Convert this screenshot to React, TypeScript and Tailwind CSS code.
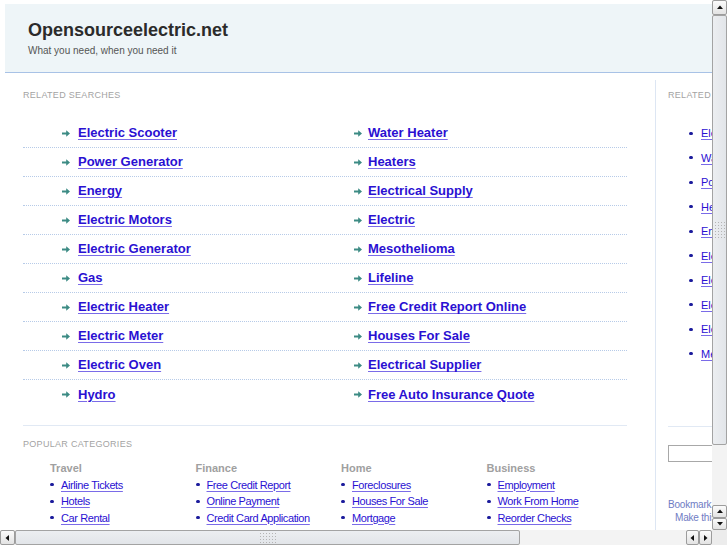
import React from 'react';

const leftLinks = [
  'Electric Scooter',
  'Power Generator',
  'Energy',
  'Electric Motors',
  'Electric Generator',
  'Gas',
  'Electric Heater',
  'Electric Meter',
  'Electric Oven',
  'Hydro',
];

const rightLinks = [
  'Water Heater',
  'Heaters',
  'Electrical Supply',
  'Electric',
  'Mesothelioma',
  'Lifeline',
  'Free Credit Report Online',
  'Houses For Sale',
  'Electrical Supplier',
  'Free Auto Insurance Quote',
];

const sideLinks = [
  'Electric Scooter',
  'Water Heater',
  'Power Generator',
  'Heaters',
  'Energy',
  'Electrical Supply',
  'Electric Motors',
  'Electric',
  'Electric Generator',
  'Mesothelioma',
];

const categories = [
  { title: 'Travel', links: ['Airline Tickets', 'Hotels', 'Car Rental'] },
  { title: 'Finance', links: ['Free Credit Report', 'Online Payment', 'Credit Card Application'] },
  { title: 'Home', links: ['Foreclosures', 'Houses For Sale', 'Mortgage'] },
  { title: 'Business', links: ['Employment', 'Work From Home', 'Reorder Checks'] },
];

const Arrow = () => (
  <svg width="8" height="7" viewBox="0 0 8 7" className="shrink-0">
    <path d="M0 2.4h4.2V0.2L8 3.5 4.2 6.8V4.6H0z" fill="#3c8b84" />
  </svg>
);

const Dot = () => <span className="inline-block w-[4px] h-[3px] rounded-full bg-[#1b1b9c] shrink-0" />;

const Grip = ({ cols }: { cols: 4 | 6 }) => (
  <div className={cols === 4 ? 'grid grid-cols-4 gap-[2px]' : 'grid grid-cols-6 gap-[2px]'}>
    {Array.from({ length: 24 }).map((_, i) => (
      <span key={i} className="w-[1px] h-[1px] bg-[#b4b4b4]" />
    ))}
  </div>
);

const ArrowBtn = ({ dir, className = '' }: { dir: 'up' | 'down' | 'left' | 'right'; className?: string }) => {
  const paths: Record<string, string> = {
    up: 'M1 5L4 1.5 7 5z',
    down: 'M1 2L4 5.5 7 2z',
    left: 'M5 1L1.5 4 5 7z',
    right: 'M2 1L5.5 4 2 7z',
  };
  return (
    <div
      className={`flex items-center justify-center border border-[#9c9c9c] rounded-[2px] bg-gradient-to-b from-[#fbfbfb] to-[#e3e3e3] ${className}`}
    >
      <svg width="8" height="8" viewBox="0 0 8 8">
        <path d={paths[dir]} fill="#111" />
      </svg>
    </div>
  );
};

export default function App() {
  const link = 'text-[#2a10d2] underline decoration-[#7a6be8] underline-offset-[2px]';
  return (
    <div
      className="w-[727px] h-[545px] overflow-hidden flex flex-col bg-white"
      style={{ fontFamily: '"Liberation Sans", Arial, sans-serif' }}
    >
      <div className="flex flex-1 min-h-0">
        {/* page */}
        <div className="w-[712px] overflow-hidden">
          <div className="w-[900px] pt-[4px]">
            {/* header */}
            <div className="ml-[5px] h-[69px] bg-[#eef5f8] border-b border-[#a8c2e6] pl-[23px] pt-[15px]">
              <div className="text-[18px] leading-[22px] font-bold text-[#2b2b2b]">Opensourceelectric.net</div>
              <div className="mt-[4px] text-[10px] leading-[12px] text-[#555]">What you need, when you need it</div>
            </div>

            <div className="flex mt-[7px]">
              {/* main column */}
              <div className="w-[656px] shrink-0 pl-[23px] pt-[10px] border-r border-[#dde6f3] pb-[40px]">
                <div className="text-[9px] leading-[10px] tracking-[0.3px] text-[#a3a3a3]">RELATED SEARCHES</div>
                <div className="mt-[19px] w-[604px]">
                  {leftLinks.map((l, i) => (
                    <div
                      key={l}
                      className={`flex h-[29px] items-center ${i < leftLinks.length - 1 ? 'border-b border-dotted border-[#b7cbe8]' : ''}`}
                    >
                      <div className="w-[331px] pl-[39px] flex items-center gap-[8px]">
                        <Arrow />
                        <a className={`${link} text-[13px] font-bold`}>{l}</a>
                      </div>
                      <div className="flex items-center gap-[6px]">
                        <Arrow />
                        <a className={`${link} text-[13px] font-bold`}>{rightLinks[i]}</a>
                      </div>
                    </div>
                  ))}
                </div>
                <div className="mt-[16px] w-[604px] border-t border-[#e1e9f4] pt-[13px]">
                  <div className="text-[9px] leading-[10px] tracking-[0.3px] text-[#a3a3a3]">POPULAR CATEGORIES</div>
                  <div className="flex pl-[27px] mt-[12px]">
                    {categories.map((c) => (
                      <div key={c.title} className="w-[145.5px] shrink-0">
                        <div className="text-[11px] leading-[14px] font-bold text-[#a0a0a0]">{c.title}</div>
                        <div className="mt-[1.5px]">
                          {c.links.map((l) => (
                            <div key={l} className="flex items-center gap-[7px] h-[16.5px]">
                              <Dot />
                              <a className={`${link} text-[11px] tracking-[-0.4px] whitespace-nowrap`}>{l}</a>
                            </div>
                          ))}
                        </div>
                      </div>
                    ))}
                  </div>
                </div>
              </div>

              {/* side column */}
              <div className="pl-[12px] pt-[10px] w-[240px] shrink-0">
                <div className="text-[9px] leading-[10px] tracking-[0.3px] text-[#a3a3a3]">RELATED SEARCHES</div>
                <div className="mt-[21px] pl-[21px]">
                  {sideLinks.map((l) => (
                    <div key={l} className="flex items-center gap-[8px] h-[24.5px]">
                      <Dot />
                      <a className={`${link} text-[11px]`}>{l}</a>
                    </div>
                  ))}
                </div>
                <div className="mt-[60px] border-t border-[#e1e9f4] pt-[18px]">
                  <div className="w-[180px] h-[17px] border border-[#a8a8a8]" />
                </div>
                <div className="mt-[36px] text-[10px] leading-[13px] text-[#6f7cc4] tracking-[-0.2px]">
                  <div>Bookmark this page</div>
                  <div className="pl-[7px]">Make this your homepage</div>
                </div>
              </div>
            </div>
          </div>
        </div>

        {/* vertical scrollbar */}
        <div className="w-[15px] flex flex-col bg-[#efefef]">
          <ArrowBtn dir="up" className="h-[15px]" />
          <div className="h-[430px] border border-[#a3a3a3] rounded-[2px] bg-gradient-to-r from-[#eceef1] to-[#e2e5e9] flex items-center justify-center">
            <Grip cols={4} />
          </div>
          <div className="flex-1 bg-[#f3f3f3]" />
          <ArrowBtn dir="up" className="h-[13px]" />
          <ArrowBtn dir="down" className="h-[12px]" />
        </div>
      </div>

      {/* horizontal scrollbar */}
      <div className="h-[15px] flex bg-[#efefef]">
        <ArrowBtn dir="left" className="w-[15px]" />
        <div className="w-[505px] border border-[#a3a3a3] rounded-[2px] bg-gradient-to-b from-[#eceef1] to-[#e2e5e9] flex items-center justify-center">
          <Grip cols={6} />
        </div>
        <div className="flex-1 bg-[#f3f3f3]" />
        <ArrowBtn dir="left" className="w-[13px]" />
        <ArrowBtn dir="right" className="w-[13px]" />
        <div className="w-[15px] bg-[#ececec]" />
      </div>
    </div>
  );
}
